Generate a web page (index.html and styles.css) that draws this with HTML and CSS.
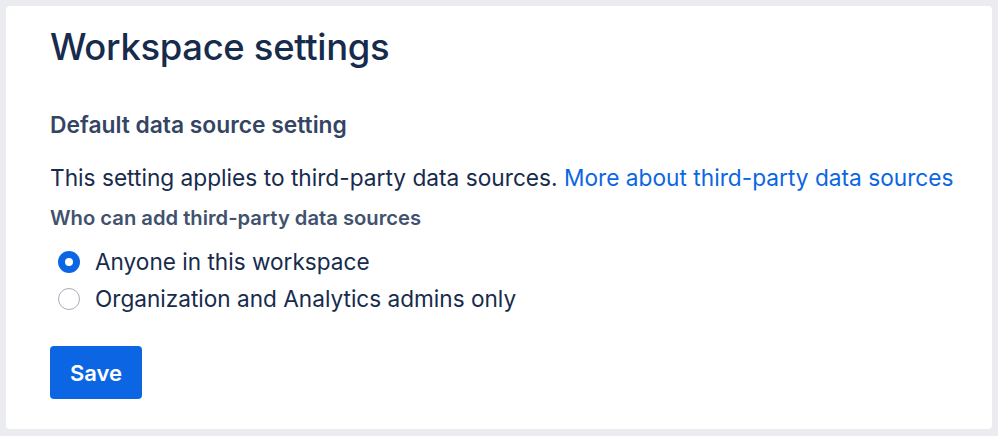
FILE: index.html
```html
<!DOCTYPE html>
<html lang="en">
<head>
<meta charset="utf-8">
<title>Workspace settings</title>
<link rel="stylesheet" href="styles.css">
</head>
<body>
<main class="card">
  <h1 class="title">Workspace settings</h1>
  <h2 class="subtitle">Default data source setting</h2>
  <p class="desc">This setting applies to third-party data sources. <a class="link" href="#">More about third-party data sources</a></p>
  <fieldset class="group">
    <legend class="label">Who can add third-party data sources</legend>
    <label class="option"><span class="radio radio-checked"></span><span class="option-text">Anyone in this workspace</span></label>
    <label class="option"><span class="radio"></span><span class="option-text">Organization and Analytics admins only</span></label>
  </fieldset>
  <button class="save" type="button">Save</button>
</main>
</body>
</html>
```
FILE: styles.css
```css
html, body {
  margin: 0;
  padding: 0;
}
body {
  background: #EBECF0;
  font-family: Inter, "Liberation Sans", sans-serif;
  color: #172B4D;
  padding: 6px 6px 7px 6px;
  height: 436px;
  box-sizing: border-box;
}
.card {
  background: #FFFFFF;
  border-radius: 4px;
  height: 100%;
  box-sizing: border-box;
  padding: 19px 0 0 44px;
  display: flex;
  flex-direction: column;
  align-items: flex-start;
}
.title {
  margin: 0;
  font-size: 36.4px;
  font-weight: 500;
  line-height: 44px;
  color: #172B4D;
  letter-spacing: -0.3px;
}
.subtitle {
  margin: 42px 0 0 0;
  font-size: 22.8px;
  font-weight: 600;
  line-height: 28px;
  color: #344563;
}
.desc {
  margin: 24px 0 0 0;
  font-size: 22.7px;
  line-height: 30px;
  color: #172B4D;
}
.link {
  color: #0C66E4;
  text-decoration: none;
}
.group {
  border: 0;
  margin: 13px 0 0 0;
  padding: 0;
  display: flex;
  flex-direction: column;
}
.label {
  padding: 0;
  font-size: 20.2px;
  font-weight: 600;
  line-height: 24px;
  color: #42526E;
  margin-bottom: 13px;
}
.option {
  display: flex;
  align-items: center;
  gap: 15px;
  height: 37px;
  padding-left: 8px;
  font-size: 22.6px;
  color: #172B4D;
}
.radio {
  width: 22px;
  height: 22px;
  border-radius: 50%;
  border: 1.5px solid #A5ADBA;
  box-sizing: border-box;
  background: #FFFFFF;
  flex: none;
}
.radio-checked {
  border: 7.5px solid #0C66E4;
  background: #FFFFFF;
}
.save {
  margin-top: 29px;
  width: 92px;
  height: 53px;
  border: 0;
  border-radius: 4px;
  background: #0C66E4;
  color: #FFFFFF;
  font-family: Inter, "Liberation Sans", sans-serif;
  font-size: 22px;
  font-weight: 600;
}
```
